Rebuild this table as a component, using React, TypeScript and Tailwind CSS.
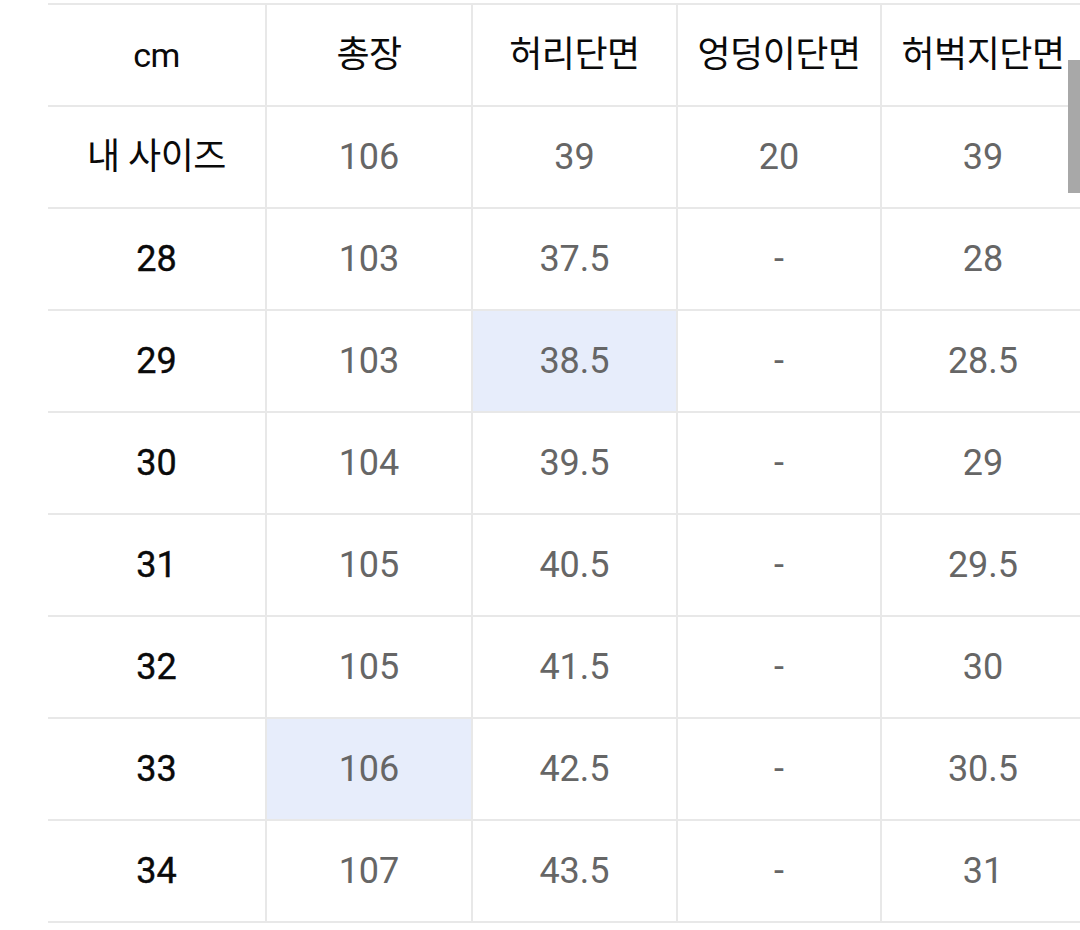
import React from "react";

const header = ["cm", "총장", "허리단면", "엉덩이단면", "허벅지단면"];

const rows: string[][] = [
  ["내 사이즈", "106", "39", "20", "39"],
  ["28", "103", "37.5", "-", "28"],
  ["29", "103", "38.5", "-", "28.5"],
  ["30", "104", "39.5", "-", "29"],
  ["31", "105", "40.5", "-", "29.5"],
  ["32", "105", "41.5", "-", "30"],
  ["33", "106", "42.5", "-", "30.5"],
  ["34", "107", "43.5", "-", "31"],
];

// cells tinted blue in the size chart: [row, col]
const marked = ["2-2", "6-1"];

const SizeTable = () => {
  return (
    <div className="w-[1080px] h-[930px] overflow-hidden bg-white relative font-['Roboto','Noto_Sans_CJK_KR',sans-serif]">
      <div className="ml-[48px] mt-[3px] w-[1040px] grid grid-cols-[217px_204px_203px_202px_202px] gap-[2px] py-[2px] bg-[#e8e8e8]">
        {header.map((h) => (
          <div
            key={h}
            className={`h-[100px] bg-white flex items-center justify-center text-[#0a0a0a] tracking-[-0.5px] ${
              h === "cm" ? "text-[34px]" : "text-[36px]"
            }`}
          >
            {h}
          </div>
        ))}
        {rows.map((row, r) =>
          row.map((cell, c) => (
            <div
              key={`${r}-${c}`}
              className={`h-[100px] flex items-center justify-center text-[36px] ${
                marked.includes(`${r}-${c}`) ? "bg-[#e7edfb]" : "bg-white"
              } ${
                c === 0
                  ? "text-[#0a0a0a] " + (r === 0 ? "tracking-[-0.5px]" : "[-webkit-text-stroke:0.4px_#0a0a0a]")
                  : "text-[#666]"
              }`}
            >
              {cell}
            </div>
          ))
        )}
      </div>

      {/* scroll indicator at the right edge */}
      <div className="absolute right-0 top-[60px] w-[12px] h-[133px] bg-[#a8a8a8]" />
    </div>
  );
};

export default function App() {
  return <SizeTable />;
}
